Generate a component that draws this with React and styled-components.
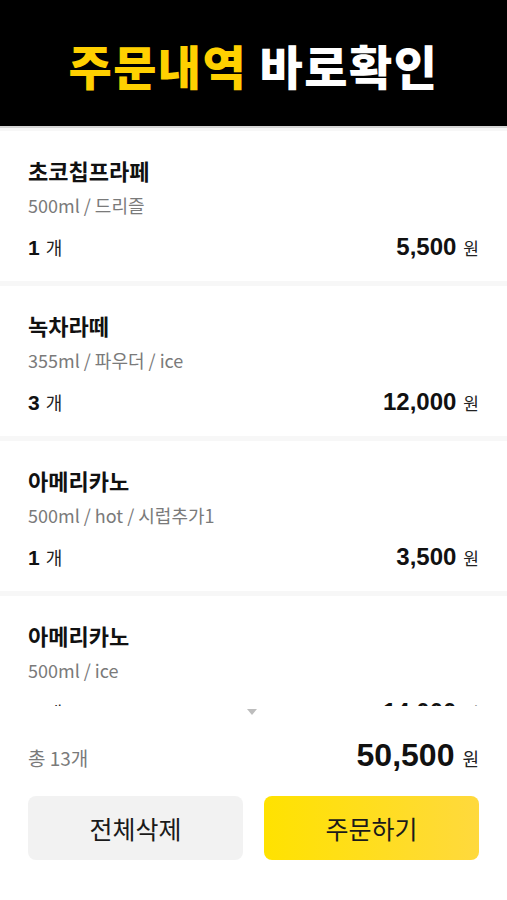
import React from 'react';
import styled, { createGlobalStyle } from 'styled-components';

const GlobalStyle = createGlobalStyle`
	html, body {
		margin: 0;
		padding: 0;
		background: #fff;
	}
	body {
		font-family: 'Noto Sans CJK KR', 'Noto Sans', sans-serif;
		color: #111;
	}
`;

const Page = styled.div`
	width: 507px;
	height: 900px;
	display: flex;
	flex-direction: column;
	background: #fff;
`;

const Header = styled.header`
	height: 126px;
	background: #000;
	border-bottom: 2px solid #d6d6d6;
	display: flex;
	align-items: center;
	justify-content: center;
`;

const Title = styled.h1`
	margin: 0;
	font-size: 47px;
	font-weight: 900;
	line-height: 1;
	color: #fff;
	letter-spacing: 1.5px;
	padding-top: 2px;
`;

const Accent = styled.span`
	color: #ffd000;
`;

const List = styled.ul`
	list-style: none;
	margin: 0;
	padding: 3px 0 0;
	height: 575px;
	overflow: hidden;
	display: flex;
	flex-direction: column;
	gap: 5px;
	background: #f7f7f7;
`;

const Item = styled.li`
	flex-shrink: 0;
	background: #fff;
	padding: 25px 28px 19px;
	display: flex;
	flex-direction: column;
`;

const Name = styled.div`
	font-size: 22px;
	font-weight: 700;
	line-height: 28px;
	color: #111;
`;

const Option = styled.div`
	margin-top: 8px;
	font-size: 18px;
	line-height: 26px;
	color: #7a7a7a;
`;

const Row = styled.div`
	margin-top: 15px;
	display: flex;
	align-items: baseline;
	justify-content: space-between;
	line-height: 28px;
`;

const Num = styled.span`
	font-family: 'Liberation Sans', Arial, sans-serif;
	font-weight: 700;
	font-size: ${(p) => p.size || 24}px;
	color: #111;
`;

const Unit = styled.span`
	margin-left: ${(p) => p.gap || 6}px;
	font-size: ${(p) => p.size || 18}px;
	color: #222;
`;

const Indicator = styled.div`
	height: 12px;
	display: flex;
	justify-content: center;
	align-items: center;
	padding-right: 3px;
	&::after {
		content: '';
		border-left: 5px solid transparent;
		border-right: 5px solid transparent;
		border-top: 6px solid #bdbdbd;
	}
`;

const Footer = styled.div`
	padding: 20px 28px 0;
`;

const Total = styled.div`
	display: flex;
	justify-content: space-between;
	align-items: baseline;
	line-height: 34px;
`;

const Count = styled.span`
	font-size: 19px;
	color: #7a7a7a;
`;

const Buttons = styled.div`
	margin-top: 20px;
	display: grid;
	grid-template-columns: 1fr 1fr;
	gap: 21px;
`;

const Button = styled.button`
	height: 64px;
	border: 0;
	border-radius: 8px;
	font-family: 'Noto Sans CJK KR', 'Noto Sans', sans-serif;
	font-size: 25px;
	color: #1a1a1a;
	background: ${(p) =>
		p.primary ? 'linear-gradient(90deg, #ffe200 0%, #ffd93d 100%)' : '#f2f2f2'};
	cursor: pointer;
`;

const orders = [
	{ name: '초코칩프라페', option: '500ml / 드리즐', qty: 1, price: '5,500' },
	{ name: '녹차라떼', option: '355ml / 파우더 / ice', qty: 3, price: '12,000' },
	{ name: '아메리카노', option: '500ml / hot / 시럽추가1', qty: 1, price: '3,500' },
	{ name: '아메리카노', option: '500ml / ice', qty: 4, price: '14,000' },
];

export default function App() {
	return (
		<>
			<GlobalStyle />
			<Page>
				<Header>
					<Title>
						<Accent>주문내역</Accent> 바로확인
					</Title>
				</Header>
				<List>
					{orders.map((o, i) => (
						<Item key={i}>
							<Name>{o.name}</Name>
							<Option>{o.option}</Option>
							<Row>
								<span>
									<Num size={21}>{o.qty}</Num>
									<Unit>개</Unit>
								</span>
								<span>
									<Num>{o.price}</Num>
									<Unit size={17} gap={7}>
										원
									</Unit>
								</span>
							</Row>
						</Item>
					))}
				</List>
				<Indicator />
				<Footer>
					<Total>
						<Count>총 13개</Count>
						<span>
							<Num size={32}>50,500</Num>
							<Unit size={18} gap={8}>
								원
							</Unit>
						</span>
					</Total>
					<Buttons>
						<Button>전체삭제</Button>
						<Button primary>주문하기</Button>
					</Buttons>
				</Footer>
			</Page>
		</>
	);
}
